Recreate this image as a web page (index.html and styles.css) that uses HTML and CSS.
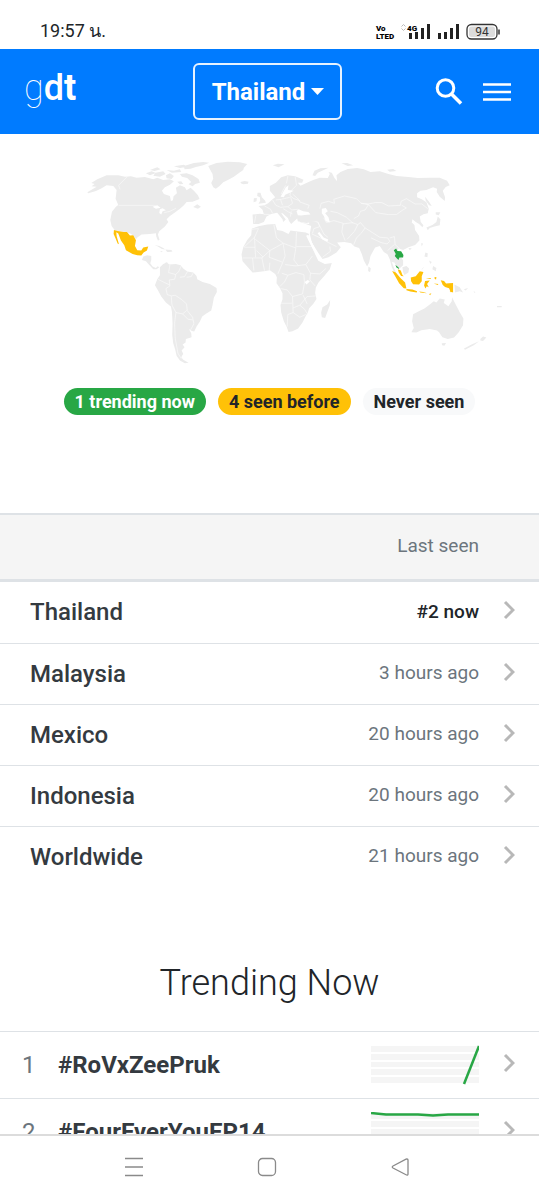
FILE: index.html
```html
<!DOCTYPE html>
<html lang="en">
<head>
<meta charset="utf-8">
<meta name="viewport" content="width=device-width, initial-scale=1">
<title>gdt - Thailand</title>
<link rel="stylesheet" href="styles.css">
</head>
<body>
<div class="screen">
  <div class="status">
    <span class="clock">19:57 น.</span>
    <svg class="status-icons" width="126" height="20" viewBox="375 20 126 20" aria-hidden="true">
      <g class="tiny">
        <text x="376" y="30">Vo</text>
        <text x="376" y="38">LTED</text>
        <text x="407" y="30">4G</text>
      </g>
      <path d="M401.500 25.500l2-2 2 2M401.500 27.500l2 2 2-2" fill="none" stroke="#bbb"/>
      <path d="M409 32h3v6h-3zM415 31h3v7h-3zM421 27h3v11h-3zM427 23h3v15h-3zM438 32h3v6h-3zM444 31h3v7h-3zM450 27h3v11h-3zM456 23h3v15h-3z" fill="#222"/>
      <rect x="467" y="23.500" width="30" height="14.500" rx="4.500" fill="#fff" stroke="#333" stroke-width="1.300"/>
      <rect x="469" y="25.500" width="26" height="10.500" rx="2.500" fill="#dcdcdc"/>
      <path d="M499 28.500v5" stroke="#333" stroke-width="1.500"/>
      <text class="battery" x="482" y="35" text-anchor="middle">94</text>
    </svg>
  </div>

  <header class="navbar">
    <a class="brand" href="#"><span class="brand-thin">g</span><span class="brand-mid">d</span>t</a>
    <button class="place" type="button">Thailand
      <svg width="13" height="7" viewBox="0 0 13 7" aria-hidden="true"><path d="M0 0h13L6.500 7z" fill="#fff"/></svg>
    </button>
    <div class="actions">
      <button class="icon-button" type="button" aria-label="Search">
        <svg width="28" height="28" viewBox="0 0 28 28" aria-hidden="true"><circle cx="10.500" cy="10" r="8.300" fill="none" stroke="#fff" stroke-width="3"/><path d="M16.500 16L26 25.500" stroke="#fff" stroke-width="3.600"/></svg>
      </button>
      <button class="icon-button" type="button" aria-label="Menu">
        <svg width="28" height="28" viewBox="0 0 28 28" aria-hidden="true"><path d="M0 6.500h28M0 14h28M0 21.500h28" stroke="#fff" stroke-width="2.600"/></svg>
      </button>
    </div>
  </header>

  <main class="content">
    <svg class="map" viewBox="30 150 480 220" role="img" aria-label="Map of places where the topic has been seen">
      <g class="land" transform="translate(70 150) scale(.33333)">
        <!-- North America -->
        <path d="M52 127L75 113L80 110L65 109L74 102L64 99L82 88L110 76L145 76L165 80L183 79L200 83L225 81L250 88L262 83L280 90L300 88L312 94L300 104L285 112L276 122L282 132L300 138L303 153L309 151L311 139L321 130L318 113L330 106L345 112L350 121L362 113L372 122L384 136L389 147L368 155L350 156L342 166L330 176L318 185L300 198L290 208L295 216L285 230L268 244L264 254L269 270L264 272L259 260L258 250L240 252L215 254L203 262L198 268L190 257L180 250L165 246L135 242L125 228L121 210L126 185L138 170L145 165L137 146L140 120L130 108L110 106L95 115L78 123L55 130Z"/>
        <path d="M370 171L382 163L393 170L384 176ZM257 68L280 64L287 72L270 80L250 77ZM288 76L300 70L312 78L305 87L290 85ZM228 70L245 64L258 69L240 76ZM240 60L262 52L272 58L254 63ZM290 60L312 62L330 58L334 66L306 68ZM312 49L342 44L352 50L330 54ZM342 48L372 39L400 36L418 38L400 46L378 51L362 56L344 58ZM330 72L350 70L368 76L386 87L390 98L376 102L368 109L356 103L364 96L352 84L336 80ZM322 95L334 94L340 102L330 103Z"/>
        <path d="M415 48L440 39L474 35L510 37L532 42L522 53L520 60L503 72L492 80L474 90L460 97L448 109L438 116L430 112L424 99L430 86L428 72L420 58Z"/>
        <path d="M254 285L268 288L280 294L286 299L276 297L264 290ZM286 299L304 300L308 305L292 306ZM270 303L278 304L276 307Z"/>
        <path d="M220 320L232 316L244 318L244 330L241 340L248 350L258 354L263 349L268 352L260 358L250 358L238 345L228 334L216 330Z"/>
      </g>
      <g class="land" transform="translate(70 250) scale(.33333)">
        <!-- South America -->
        <path d="M270 52L280 42L290 38L298 44L318 42L332 46L340 56L352 65L370 68L380 78L382 88L398 96L420 102L440 114L441 126L432 143L428 165L424 182L407 192L397 200L390 215L380 230L373 245L366 243L357 237L364 250L365 262L348 267L347 278L338 284L344 292L335 302L340 312L334 322L340 330L356 339L345 340L330 332L320 318L316 300L310 280L307 255L308 220L306 185L303 170L288 158L274 140L264 121L255 106L262 88L270 76Z"/>
        <path d="M285 39L292 37L294 45ZM292 1L302 1L306 4L296 6Z"/>
      </g>
      <g class="land" transform="translate(220 150) scale(.33333)">
        <!-- Europe and Asia -->
        <path d="M100 222L98 194L120 191L132 193L128 179L116 168L134 166L145 160L158 148L166 142L160 134L150 122L150 108L168 98L184 82L204 76L226 79L251 89L247 98L234 98L242 107L258 100L280 90L300 83L324 84L330 72L326 66L336 68L344 84L352 94L350 76L362 66L384 57L412 54L432 58L452 66L480 64L506 72L530 78L566 81L594 84L630 83L660 83L682 92L690 106L678 111L669 122L676 142L675 153L660 140L651 126L652 116L640 112L620 120L602 122L592 130L592 142L606 148L620 157L627 176L624 190L611 193L600 200L603 216L611 226L608 232L598 222L588 216L578 208L576 218L584 225L586 240L598 258L599 272L586 285L566 292L550 300L537 296L530 304L542 318L550 332L550 346L540 355L530 350L524 338L516 336L522 352L532 376L526 372L516 352L510 328L503 313L492 306L480 288L466 293L452 318L448 338L442 350L432 332L426 312L418 294L404 290L394 280L374 276L352 278L358 286L363 292L350 308L326 322L308 327L296 310L276 278L270 252L274 228L252 220L234 214L232 206L214 222L208 214L204 204L188 190L184 190L198 209L190 216L188 208L172 188L154 192L140 200L132 216L116 222Z"/>
        <path d="M113 128L122 128L126 142L136 152L138 158L116 161L121 152L120 142L112 138ZM102 145L111 144L110 154L101 157ZM62 96L74 93L86 95L84 101L70 103L63 100ZM159 46L174 41L194 43L176 52ZM278 76L284 62L302 55L326 53L310 61L294 68L286 78ZM365 40L382 39L400 46L384 48ZM502 59L520 57L530 63L510 65ZM616 140L628 155L636 168L628 166L618 152ZM648 187L662 187L657 196L648 194ZM654 200L662 208L660 226L644 230L630 234L624 241L620 233L638 225L650 216ZM604 280L610 281L606 290ZM566 294L576 295L570 301ZM617 308L624 310L623 322L614 320Z"/>
        <path d="M446 350L453 355L451 367L445 363ZM548 352L560 348L568 356L566 368L554 375L550 366ZM628 332L636 336L632 342ZM640 348L650 354L648 364L638 358ZM612 350L604 362L610 356Z"/>
        <!-- Africa -->
        <path d="M96 236L116 229L142 224L166 222L172 240L188 243L206 252L212 242L228 244L258 248L268 252L264 264L278 294L292 318L302 334L316 342L336 339L330 358L312 380L296 398L288 413L286 429L290 447L280 462L268 475L264 488L257 500L248 518L235 536L218 544L206 546L201 532L192 514L184 488L182 465L188 448L188 430L180 414L170 400L171 382L166 372L150 361L132 364L98 368L84 352L68 334L65 314L70 292L82 270L94 256Z"/>
        <path d="M331 450L330 466L316 504L306 502L304 488L308 472L322 464Z"/>
      </g>
      <g class="land" transform="translate(360 240) scale(.33333)">
        <!-- Oceania -->
        <path d="M160 223L177 214L194 206L212 192L222 184L230 188L240 176L255 179L252 189L266 199L276 184L277 172L286 190L300 217L311 236L310 256L297 277L283 293L264 297L248 292L238 277L232 272L210 267L185 271L170 278L155 277L162 264L157 244ZM246 310L259 309L254 318L247 316ZM362 297L370 290L380 293L370 303L362 302ZM358 304L342 316L316 330L312 327L334 315ZM284 134L300 142L310 158L300 154L286 158ZM312 148L325 144L318 152ZM341 154l6 2-2 3zM412 198h14v4h-14z"/>
      </g>

      <!-- Country borders and inland water -->
      <g class="borders" transform="translate(70 150) scale(.33333)">
        <path d="M146 166H250L264 171M172 80L146 106L150 118M283 188L300 184L318 175"/>
        <path d="M248 170L262 166L272 173L258 176ZM270 178L278 175L288 181L278 184L274 194L268 189Z" class="water"/>
      </g>
      <g class="borders" transform="translate(70 250) scale(.33333)">
        <path d="M300 45L296 68L318 74L314 88L298 90L300 108L288 116L292 134L304 138L316 136L334 148L350 162L352 182L368 202L372 222L362 240M264 88L284 98L299 105M304 138L306 165L318 188L314 220L316 265L324 310L334 326M318 188L338 192L350 182M338 192L354 208L368 210M334 48L326 66L318 72M352 66L344 80L330 82M370 69L364 80L350 82"/>
      </g>
      <g class="borders" transform="translate(220 150) scale(.33333)">
        <path d="M96 238L116 236L104 262L72 292M104 262L107 322M106 268L150 302L126 324L98 324M150 302L190 280L170 264L162 224M190 280L228 294L230 246M230 290H278M228 294L222 330L236 348M190 282L196 318L186 344L174 372M150 302L148 322L186 336M74 292H106M68 324H98L102 362M126 324L134 362M150 338L148 362M196 344L228 348L258 344L278 318M258 344L272 370L300 372L318 356M272 370L270 390L286 408M204 376L228 368L252 374L254 398L248 432L218 440L202 420L182 416M182 460H216M218 440L220 488L204 494L202 530M220 474L240 466L262 440L288 438M220 488L240 502L258 494M240 466L254 478L264 494M250 436L262 462M186 370L204 376L194 396L180 410M110 302L130 322M276 252L306 266L326 278L350 290M308 322L332 304L330 290"/>
        <path d="M132 193L154 194M108 196L104 218M134 168L152 178L158 190M158 150L168 166L182 172L204 170L218 160L212 140M182 148L188 166M168 150L184 148L210 142M204 170L216 180L234 178M190 176L206 186L218 192M198 106L190 120L184 132M204 78L200 100M226 80L230 106L214 122M218 132L238 150L240 156L268 166L264 176M214 122L210 136L222 146L240 152M214 184L212 200M270 212L294 216L300 230L282 236L278 250M294 216L312 252L324 262M312 204L320 218L342 212L370 220L366 246L376 272M300 176L304 160L326 154L344 160L342 148L374 138L410 146L424 160L446 164L436 180L422 184L416 198L402 206M332 184L352 188L380 202L400 220M370 222L398 218L414 224L404 244L382 268M414 224L422 218L436 234L424 250L410 264L402 284M424 160L446 162L466 158L486 158L506 168L542 166L544 154L560 146L586 162L606 162L624 176M446 164L468 188L506 194L530 194L546 182L560 174L546 166M436 234L458 248L480 262L504 264L510 274L502 282L484 278L454 264M510 264L524 260L526 284L540 296M504 302L516 290L524 284M524 304L536 304L550 322"/>
        <path class="water" d="M230 184L236 178L250 184L266 186L272 194L254 195L244 197L234 196ZM306 176L318 174L324 184L316 190L326 202L330 218L318 214L312 198L306 190ZM198 112L206 106L204 120L222 122L210 128L196 134L192 142L182 140L188 130ZM236 214L252 220L268 222L268 214L290 212L270 206L248 209ZM254 396L264 390L270 395L260 404Z"/>
        <path class="water-line" d="M262 256L280 292L298 330L314 338L344 326M296 248L310 266L324 272"/>
        <path class="land" d="M234 202L252 199L272 202L290 208L288 214L260 219L240 216Z"/>
      </g>

      <g class="before" transform="translate(70 150) scale(.33333)">
        <path d="M132 240L143 243L162 246H171L180 257L190 256L198 271L195 288L202 301L214 302L220 293L235 290L231 302L221 308L214 317L202 316L188 312L168 301L163 286L153 272L145 251L139 247L140 258L147 283L143 281L137 266L131 252Z"/>
      </g>
      <g class="before" transform="translate(360 240) scale(.33333)">
        <path d="M97 93L108 98L122 114L136 128L140 146L132 145L118 130L108 112ZM114 88L123 92L128 105L132 109L124 108L117 98ZM140 147L158 149L172 154L171 158L152 155L140 151ZM178 155L190 156L202 160L182 158ZM153 113L168 109L180 94L191 96L186 109L186 124L178 134L160 133L154 124ZM196 123L210 122L206 127L202 132L207 142L201 139L197 146L193 137ZM243 121L253 123L259 131L268 130L280 129L280 158L272 155L268 145L256 141L249 135ZM224 112L230 111L229 119L225 117ZM198 115L214 114L212 117ZM222 131L236 132L234 135ZM208 162L215 160L211 166ZM270 153L276 153L274 158Z"/>
      </g>
      <g class="now" transform="translate(360 240) scale(.33333)">
        <path d="M102 31L109 26L113 33L124 34L131 45L130 53L119 53L116 60L110 54L105 48L108 42ZM107 75L116 82L119 88L110 83Z"/>
      </g>
    </svg>

    <div class="legend">
      <span class="badge badge-now">1 trending now</span>
      <span class="badge badge-before">4 seen before</span>
      <span class="badge badge-never">Never seen</span>
    </div>

    <table class="places">
      <thead>
        <tr><th class="name" aria-label="Place"></th><th class="seen">Last seen</th><th class="go" aria-label="Details"></th></tr>
      </thead>
      <tbody>
        <tr><td class="name"><a href="#">Thailand</a></td><td class="seen current">#2 now</td><td class="go"><svg class="chevron" viewBox="0 0 12 20" aria-hidden="true"><path d="M2 2l8 8-8 8"/></svg></td></tr>
        <tr><td class="name"><a href="#">Malaysia</a></td><td class="seen">3 hours ago</td><td class="go"><svg class="chevron" viewBox="0 0 12 20" aria-hidden="true"><path d="M2 2l8 8-8 8"/></svg></td></tr>
        <tr><td class="name"><a href="#">Mexico</a></td><td class="seen">20 hours ago</td><td class="go"><svg class="chevron" viewBox="0 0 12 20" aria-hidden="true"><path d="M2 2l8 8-8 8"/></svg></td></tr>
        <tr><td class="name"><a href="#">Indonesia</a></td><td class="seen">20 hours ago</td><td class="go"><svg class="chevron" viewBox="0 0 12 20" aria-hidden="true"><path d="M2 2l8 8-8 8"/></svg></td></tr>
        <tr><td class="name"><a href="#">Worldwide</a></td><td class="seen">21 hours ago</td><td class="go"><svg class="chevron" viewBox="0 0 12 20" aria-hidden="true"><path d="M2 2l8 8-8 8"/></svg></td></tr>
      </tbody>
    </table>

    <h2 class="title">Trending Now</h2>

    <table class="trends">
      <tbody>
        <tr>
          <td class="rank">1</td>
          <td class="tag"><a href="#">#RoVxZeePruk</a></td>
          <td class="chart"><svg class="spark" viewBox="0 0 108 40" aria-hidden="true"><path class="bands" d="M0 1h108v6H0zM0 9h108v6H0zM0 17h108v5H0zM0 24h108v6H0zM0 32h108v6H0z"/><path class="line" d="M93 39L108 1"/></svg></td>
          <td class="go"><svg class="chevron" viewBox="0 0 12 20" aria-hidden="true"><path d="M2 2l8 8-8 8"/></svg></td>
        </tr>
        <tr>
          <td class="rank">2</td>
          <td class="tag"><a href="#">#FourEverYouEP14</a></td>
          <td class="chart"><svg class="spark" viewBox="0 0 108 40" aria-hidden="true"><path class="bands" d="M0 1h108v6H0zM0 9h108v6H0zM0 17h108v5H0zM0 24h108v6H0zM0 32h108v6H0z"/><path class="line" d="M0 1L15 2.500H47L62 3.500L77 2.500H108"/></svg></td>
          <td class="go"><svg class="chevron" viewBox="0 0 12 20" aria-hidden="true"><path d="M2 2l8 8-8 8"/></svg></td>
        </tr>
      </tbody>
    </table>
  </main>

  <nav class="system">
    <button class="system-button" type="button" aria-label="Recent apps"><svg width="20" height="20" viewBox="0 0 20 20" aria-hidden="true"><path d="M1 1.500h18M1 10h18M1 18.500h18"/></svg></button>
    <button class="system-button" type="button" aria-label="Home"><svg width="20" height="20" viewBox="0 0 20 20" aria-hidden="true"><rect x="1.500" y="1.500" width="17" height="17" rx="4"/></svg></button>
    <button class="system-button" type="button" aria-label="Back"><svg width="20" height="20" viewBox="0 0 20 20" aria-hidden="true"><path d="M17 2Q18 2 18 3V17Q18 18.500 16.500 18L3 11Q1.500 10 3 9L16 2.200Z"/></svg></button>
  </nav>
</div>
</body>
</html>
```
FILE: styles.css
```css
* {
  box-sizing: border-box;
}

body {
  margin: 0;
  background: #fff;
  color: #212529;
  font-family: Roboto, "Noto Sans", "Liberation Sans", sans-serif;
}

a {
  color: inherit;
  text-decoration: none;
}

button {
  margin: 0;
  padding: 0;
  border: 0;
  background: none;
  color: inherit;
  font: inherit;
}

svg {
  display: block;
}

.screen {
  display: flex;
  flex-direction: column;
  height: 100vh;
}

/* Status bar */
.status {
  display: flex;
  flex: none;
  justify-content: space-between;
  align-items: flex-end;
  height: 49px;
  padding: 0 38px 8px 40px;
}

.clock {
  font-size: 18px;
  line-height: 20px;
}

.tiny {
  font-size: 8px;
  font-weight: 900;
}

.battery {
  fill: #333;
  font-size: 12px;
}

/* Header */
.navbar {
  display: grid;
  flex: none;
  grid-template-columns: 1fr auto 1fr;
  align-items: center;
  height: 85px;
  padding: 0 28px 0 24px;
  background: #007bff;
  color: #fff;
}

.brand {
  padding-bottom: 8px;
  font-size: 36px;
  font-weight: 700;
  line-height: 42px;
}

.brand-thin {
  font-weight: 100;
}

.brand-mid {
  font-weight: 500;
}

.place {
  display: flex;
  gap: 6px;
  align-items: center;
  justify-content: center;
  height: 57px;
  padding: 0 16px 0 17px;
  border: 2px solid #e6f2ff;
  border-radius: 6px;
  font-size: 24px;
  font-weight: 700;
}

.actions {
  display: flex;
  gap: 20px;
  justify-content: flex-end;
}

.content {
  flex: 1;
  min-height: 0;
  overflow: hidden;
}

.map {
  width: 89%;
  margin: 16px auto 0;
}

.land {
  fill: #ebebeb;
}

.borders {
  fill: none;
  stroke: #fafafa;
  stroke-width: 2;
}

.borders .water {
  fill: #fff;
  stroke: none;
}

.borders .land {
  fill: #ebebeb;
  stroke: none;
}

.borders .water-line {
  stroke: #fff;
  stroke-width: 7;
}

.before {
  fill: #ffc107;
}

.now {
  fill: #28a745;
}

.legend {
  display: flex;
  gap: 12px;
  justify-content: center;
  margin: 18px 0 98px;
}

.badge {
  padding: 0 11px;
  border-radius: 14px;
  font-size: 18px;
  font-weight: 700;
  line-height: 27px;
}

.badge-now {
  background: #28a745;
  color: #fff;
}

.badge-before {
  background: #ffc107;
}

.badge-never {
  background: #f8f9fa;
}

/* Tables */
table {
  width: 100%;
  border-collapse: separate;
  border-spacing: 0;
}

td,
th {
  padding: 0;
}

.places th {
  height: 69px;
  border-top: 2px solid #dee2e6;
  border-bottom: 3px solid #dee2e6;
  background: #f5f5f5;
  font-weight: 400;
}

.places td {
  height: 61px;
}

.places tr + tr td {
  border-top: 1px solid #dee2e6;
}

.places .name {
  padding-left: 30px;
  color: #343a40;
  font-size: 24px;
  font-weight: 500;
  text-align: left;
}

.places .seen {
  padding-bottom: 2px;
  color: #6c757d;
  font-size: 19px;
  text-align: right;
}

.places .current {
  color: #212529;
  font-weight: 500;
}

.go {
  width: 60px;
  padding-left: 24px;
}

.chevron {
  width: 12px;
  height: 20px;
  margin-bottom: 4px;
  fill: none;
  stroke: #b8b8b8;
  stroke-width: 3;
}

.title {
  margin: 74px 0 26px;
  font-size: 36px;
  font-weight: 300;
  line-height: 44px;
  text-align: center;
}

.trends td {
  height: 67px;
  border-top: 1px solid #dee2e6;
}

.trends .rank {
  width: 58px;
  padding-left: 22px;
  color: #6c757d;
  font-size: 24px;
}

.trends .tag {
  color: #343a40;
  font-size: 24px;
  font-weight: 700;
}

.trends .chart {
  width: 108px;
}

.spark {
  width: 108px;
  height: 40px;
}

.bands {
  fill: #f5f5f5;
}

.line {
  fill: none;
  stroke: #28a745;
  stroke-width: 2.5px;
}

/* System navigation */
.system {
  display: flex;
  flex: none;
  justify-content: center;
  gap: 113px;
  align-items: center;
  height: 66px;
  padding: 0 6px 2px 0;
  border-top: 2px solid #dcdcdc;
  background: #fff;
}

.system-button svg {
  fill: none;
  stroke: #8a8a8a;
  stroke-width: 1.3px;
}
```
